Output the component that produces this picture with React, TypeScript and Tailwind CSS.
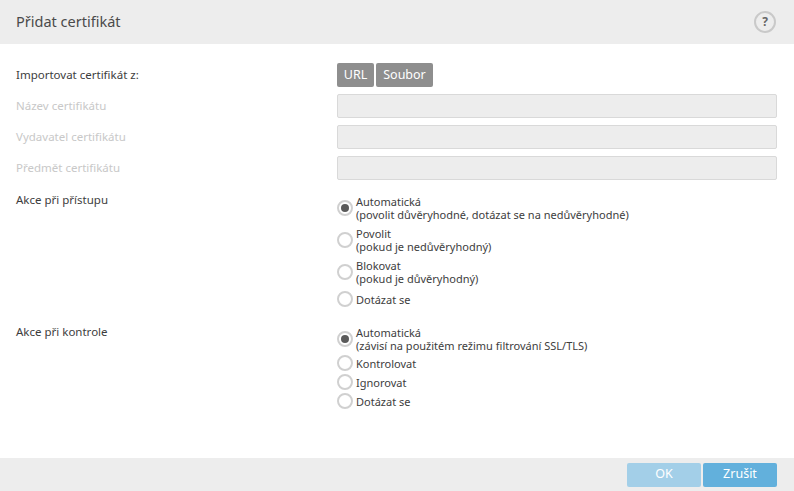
const font = "[font-family:'Noto_Sans','Open_Sans',sans-serif]";

function Radio({ checked, top, lines }: { checked?: boolean; top?: boolean; lines: string[] }) {
  return (
    <div className="flex items-center gap-[3px]">
      <div className="flex h-[16px] w-[16px] shrink-0 items-center justify-center rounded-full border-2 border-[#d0d0d0] bg-white">
        {checked && <div className="h-[8px] w-[8px] rounded-full bg-[#5a5a5a]" />}
      </div>
      <div className="text-[11px] leading-[13px] text-[#3d3d3d]">
        {lines.map((l) => (
          <div key={l}>{l}</div>
        ))}
      </div>
    </div>
  );
}

function FieldRow({ label }: { label: string }) {
  return (
    <div className="flex h-[24px] items-center">
      <div className="w-[321px] pb-[1px] text-[11.5px] text-[#c8c8c8]">{label}</div>
      <div className="h-[24px] w-[440px] rounded-[2px] border border-[#d9d9d9] bg-[#ededed]" />
    </div>
  );
}

export default function App() {
  return (
    <div className={`flex h-[491px] w-[794px] flex-col overflow-hidden bg-white ${font}`}>
      <header className="flex h-[44px] shrink-0 items-center justify-between bg-[#ededed] pl-[16px] pr-[18px]">
        <h1 className="text-[14.5px] font-normal text-[#4a4a4a]">Přidat certifikát</h1>
        <div className="flex h-[22px] w-[22px] items-center justify-center rounded-full border-2 border-[#c9c9c9] text-[12px] font-bold leading-none text-[#666]">
          ?
        </div>
      </header>

      <main className="flex flex-1 flex-col pl-[16px] pt-[19px]">
        <div className="flex flex-col gap-[7px]">
          <div className="flex h-[24px] items-center">
            <div className="w-[321px] text-[11.5px] text-[#3d3d3d]">Importovat certifikát z:</div>
            <div className="flex gap-[2px]">
              <div className="flex h-[24px] w-[37px] items-center justify-center rounded-[2px] bg-[#8e8e8e] text-[12.5px] text-white">URL</div>
              <div className="flex h-[24px] w-[57px] items-center justify-center rounded-[2px] bg-[#8e8e8e] text-[12.5px] text-white">Soubor</div>
            </div>
          </div>
          <FieldRow label="Název certifikátu" />
          <FieldRow label="Vydavatel certifikátu" />
          <FieldRow label="Předmět certifikátu" />
        </div>

        <div className="mt-[12px] flex">
          <div className="w-[321px] text-[11.5px] leading-[16px] text-[#3d3d3d]">Akce při přístupu</div>
          <div className="flex flex-col gap-[6px] pt-[3px]">
            <Radio checked lines={["Automatická", "(povolit důvěryhodné, dotázat se na nedůvěryhodné)"]} />
            <Radio lines={["Povolit", "(pokud je nedůvěryhodný)"]} />
            <Radio lines={["Blokovat", "(pokud je důvěryhodný)"]} />
            <Radio lines={["Dotázat se"]} />
          </div>
        </div>

        <div className="mt-[17px] flex">
          <div className="w-[321px] text-[11.5px] leading-[16px] text-[#3d3d3d]">Akce při kontrole</div>
          <div className="flex flex-col gap-[3px] pt-[2px]">
            <Radio checked lines={["Automatická", "(závisí na použitém režimu filtrování SSL/TLS)"]} />
            <Radio lines={["Kontrolovat"]} />
            <Radio lines={["Ignorovat"]} />
            <Radio lines={["Dotázat se"]} />
          </div>
        </div>
      </main>

      <footer className="flex h-[33px] shrink-0 items-center justify-end gap-[2px] bg-[#ededed] pr-[17px]">
        <div className="flex h-[24px] w-[74px] items-center justify-center rounded-[2px] bg-[#a3cfe8] text-[12.5px] text-white">OK</div>
        <div className="flex h-[24px] w-[74px] items-center justify-center rounded-[2px] bg-[#62b0dc] text-[12.5px] text-white">Zrušit</div>
      </footer>
    </div>
  );
}
